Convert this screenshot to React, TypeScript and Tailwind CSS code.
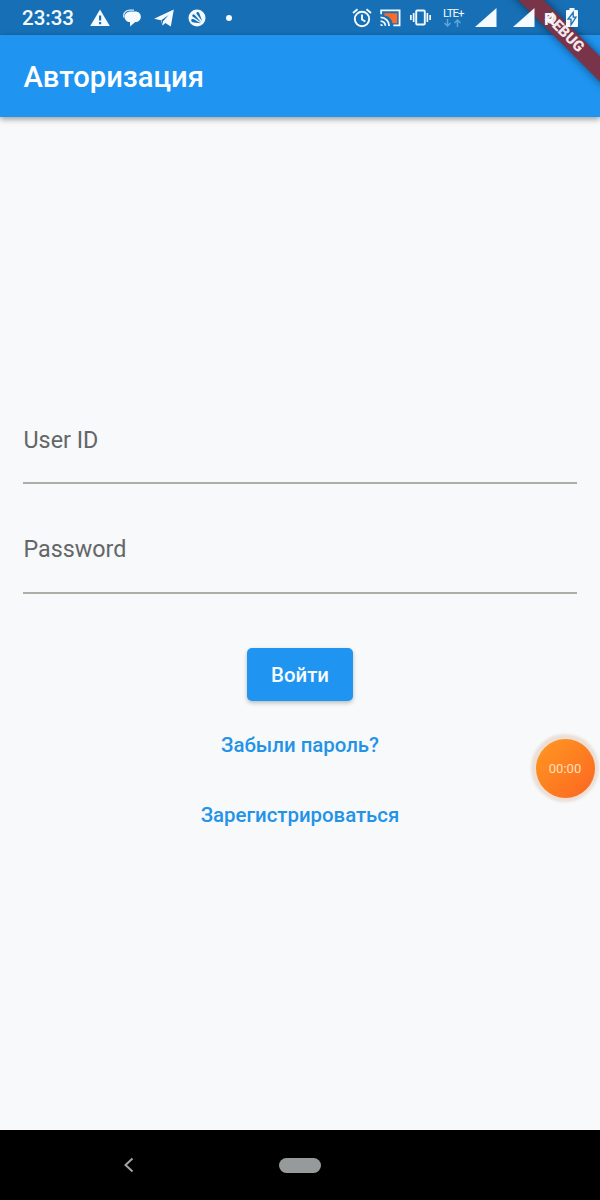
import type { ReactNode } from "react";

function Icon({ className, box, children }: { className: string; box: string; children: ReactNode }) {
  return (
    <svg viewBox={box} className={"block shrink-0 " + className} fill="#f4fafd">
      {children}
    </svg>
  );
}

function StatusBar() {
  return (
    <div className="h-[35px] shrink-0 bg-[#1770b6]">
      <div className="relative z-10 flex h-[35px] items-center pl-[22px] text-[#f4fafd]">
        <span className="w-[68px] pt-[2px] text-[20.5px] leading-[33px] font-medium">23:33</span>
        <Icon className="h-[18px] w-5" box="0 0 20 18">
          <path d="M10 0.500 19.800 17H.2Z" />
          <path d="M9 6.500h2.200v5H9zM9 13h2.200v2.200H9z" fill="#1770b6" />
        </Icon>
        <Icon className="ml-[13px] h-[18px] w-[18px]" box="0 0 18 18">
          <path d="M1 8.500C-.2 4.500 2.500 1.300 6.500 1.100h4.500" fill="none" stroke="#d3eaf7" strokeWidth="1.400" />
          <path d="M7.800 2.500h4.400c3.400 0 5.600 2.200 5.600 5.200 0 3.200-2.200 5.300-5.500 5.400L7 17.500v-4.400C3.700 12.800 1.600 10.800 1.600 7.900c0-3.300 2.800-5.400 6.200-5.400Z" />
        </Icon>
        <Icon className="ml-[13px] h-[18px] w-5" box="0 0 20 18">
          <path d="M0 9.800 19.800.6 16.800 17.600 11.300 14 8.600 16.500 6.800 11.200Z" />
          <path d="m7.300 11.300 7.300-5.400-5.500 6.400-.5 3.200Z" fill="#1770b6" />
        </Icon>
        <Icon className="ml-[14px] h-[18px] w-[18px]" box="0 0 18 18">
          <circle cx="9" cy="9" r="8.500" />
          <path d="M4.300 6.200c.3-1.200 1.600-1.200 2.500-.2l6.500 7.500-7.200-4.900C4.700 7.700 4 7.300 4.300 6.200ZM9 3.200c1-.7 2 0 2.400 1.200l2.800 7.800L9.200 5.800C8.400 4.800 8 3.900 9 3.200ZM3.200 11c.2-1.100 1.200-1.200 2.300-.9l7.100 4.200-6.600-.8c-1.700-.2-3-1.100-2.800-2.500Z" fill="#1770b6" />
        </Icon>
        <span className="ml-5 size-[6px] rounded-full bg-[#f4fafd]" />

        <Icon className="ml-[120px] h-5 w-5" box="0 0 20 20">
          <g fill="none" stroke="#f4fafd" strokeWidth="1.900">
            <circle cx="10" cy="11" r="7.200" />
            <path d="M1 5 5.500 1.300M19 5l-4.500-3.700M10 6.600v4.900l3.300 2" />
          </g>
        </Icon>
        <Icon className="ml-2 h-[18px] w-[21px]" box="0 0 22 18">
          <path d="M4.500 4h13.500v10.500H13C12.500 10 9.500 7 4.500 6.500Z" fill="#ff6a2b" />
          <g fill="none" stroke="#f4fafd" strokeWidth="1.900">
            <path d="M1.200 5V1h19.300v15.800H14" />
            <path d="M.6 8.300a9 9 0 0 1 9 9M.6 12.200a5 5 0 0 1 5 5" />
          </g>
          <path d="M.6 14.900A2.500 2.500 0 0 1 3 17.400H.6Z" />
        </Icon>
        <Icon className="ml-[9px] h-[18px] w-[21px]" box="0 0 21 18">
          <rect x="6.200" y="1.500" width="8.600" height="14" rx="1" fill="none" stroke="#f4fafd" strokeWidth="1.900" />
          <path d="M0 6h1.700v5H0zM2.800 4h1.700v9H2.800zM19.300 6H21v5h-1.700zM16.500 4h1.700v9h-1.700z" />
        </Icon>
        <div className="ml-3 flex w-[22px] flex-col items-start pb-[2px]">
          <span className="text-[11.5px] leading-[12px] tracking-[-1px]">LTE+</span>
          <Icon className="h-[8px] w-[20px]" box="0 0 20 8">
            <path d="M4.500 0v7M1.500 4l3 3 3-3M14.500 8V1M11.500 4l3-3 3 3" fill="none" stroke="#5da6d9" strokeWidth="1.500" />
          </Icon>
        </div>
        <Icon className="ml-[10px] h-[19px] w-[22px]" box="0 0 22 19">
          <path d="M21.500 0v19H0Z" />
        </Icon>
        <Icon className="ml-4 h-[19px] w-[22px]" box="0 0 22 19">
          <path d="M21.500 0v19H0Z" />
        </Icon>
        <span className="ml-[9px] w-[10px] pt-[2px] text-[17px] leading-[18px] font-bold">R</span>
        <Icon className="ml-[12px] h-[19px] w-[12px]" box="0 0 12 19">
          <path d="M3.500 0h5v2H11q1 0 1 1v15q0 1-1 1H1q-1 0-1-1V3q0-1 1-1h2.500Z" />
          <path d="M7.200 4.500v4.700H10L5 16.800v-5.600H2Z" fill="none" stroke="#1770b6" strokeWidth="1.300" />
        </Icon>
      </div>
    </div>
  );
}

function DebugBanner() {
  return (
    <div className="pointer-events-none absolute top-0 right-0 h-[117px] w-[117px] overflow-hidden">
      <div className="absolute top-[25px] left-[17px] flex h-[17.5px] w-[130px] rotate-45 items-center justify-center bg-[#793449] shadow-[0_0_9px_rgba(0,0,0,0.5)]">
        <span className="pr-[2px] text-[15px] leading-[17px] font-black text-[#f3e9ec]">DEBUG</span>
      </div>
    </div>
  );
}

function Field({ label }: { label: string }) {
  return (
    <label className="flex h-[109.5px] flex-col text-[23.3px] leading-[30px] text-[#646667]">
      <span className="pl-[0.5px]">{label}</span>
      <span className="mt-[27.5px] h-[2px] bg-[#adaea7]" />
    </label>
  );
}

export default function App() {
  return (
    <div className="relative flex h-[1200px] w-[600px] flex-col overflow-hidden bg-[#f7f9fa] font-['Roboto',sans-serif]">
      <StatusBar />
      <header className="flex h-[82px] shrink-0 items-center bg-[#1f95f1] px-[23.5px] shadow-[0_2px_6px_rgba(0,0,0,0.4)]">
        <h1 className="pt-px text-[29.2px] leading-[36px] font-medium text-white">Авторизация</h1>
      </header>
      <main className="flex flex-1 flex-col px-[23px] pt-[307.5px]">
        <Field label="User ID" />
        <Field label="Password" />
        <div className="mt-[4.5px] flex flex-col items-center text-[20.4px] font-medium text-[#2393e8]">
          <button className="h-[53px] w-[106px] rounded-[5px] bg-[#1f95f1] pt-px text-[#f7fbfd] shadow-[0_2px_4px_rgba(0,0,0,0.25)]">
            Войти
          </button>
          <button className="mt-[9px] h-[70px]">Забыли пароль?</button>
          <button className="h-[70px]">Зарегистрироваться</button>
        </div>
      </main>
      <nav className="flex h-[70px] shrink-0 items-center bg-black pl-[123px]">
        <Icon className="h-4 w-[11px]" box="0 0 11 16">
          <path d="M9.500 1.500 2.500 8l7 6.500" fill="none" stroke="#a2a5a6" strokeWidth="2" />
        </Icon>
        <span className="ml-[145px] h-[15px] w-[42px] rounded-full bg-[#979a9b]" />
      </nav>
      <DebugBanner />
      <div className="absolute top-[733px] left-[530px] flex size-[70px] items-center justify-center">
        <div className="absolute inset-[1px] rounded-full bg-[#ecdfd6] blur-[1px]" />
        <div className="relative flex size-[59px] items-center justify-center rounded-full bg-linear-to-br from-[#ff9821] to-[#fb6421] pt-px text-[13px] text-[#ffe0bf]">
          00:00
        </div>
      </div>
    </div>
  );
}
